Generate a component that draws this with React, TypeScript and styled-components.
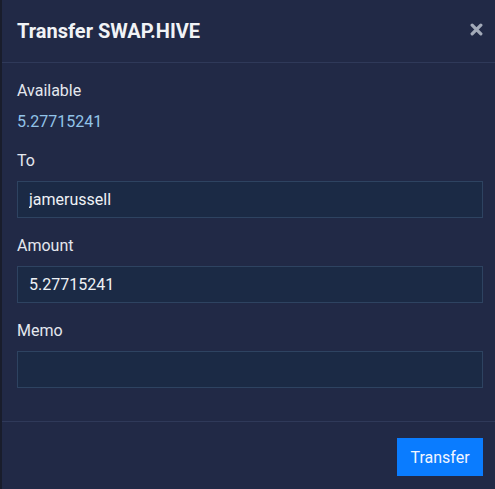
import React, { useState } from 'react';
import styled, { createGlobalStyle } from 'styled-components';

const GlobalStyle = createGlobalStyle`
    html,
    body {
        margin: 0;
        padding: 0;
        background: #191d2c;
        overflow: hidden;
    }
    body {
        font-family: Roboto, 'Liberation Sans', Arial, sans-serif;
    }
`;

const Page = styled.div`
    height: 489px;
    padding-left: 2px;
`;

const Modal = styled.div`
    width: 496px;
    height: 100%;
    background: #212946;
    display: flex;
    flex-direction: column;
    color: #e6e9ef;
`;

const Header = styled.div`
    height: 63px;
    box-sizing: border-box;
    padding: 0 15px;
    display: flex;
    align-items: center;
    justify-content: space-between;
    border-bottom: 1px solid #2f3959;
`;

const Title = styled.h5`
    margin: 0;
    font-size: 20px;
    font-weight: 700;
    color: #f1f3f6;
`;

const CloseButton = styled.button`
    border: 0;
    background: none;
    padding: 0;
    margin-top: -3px;
    width: 14px;
    height: 14px;
    display: flex;
    align-items: center;
    justify-content: center;
    cursor: pointer;
`;

const Body = styled.div`
    padding: 16px 15px 17px;
    border-bottom: 1px solid #2f3959;
`;

const Group = styled.div`
    margin-bottom: 16px;
`;

const Label = styled.div`
    font-size: 16px;
    line-height: 24px;
    margin-bottom: 8px;
    color: #e4e7ee;
`;

const Value = styled.div`
    font-size: 16px;
    line-height: 22px;
    color: #92c3e8;
`;

const Input = styled.input`
    display: block;
    width: 466px;
    height: 37px;
    box-sizing: border-box;
    padding: 0 11px;
    background: #1b2a45;
    border: 1px solid #2e4361;
    color: #eef1f5;
    font-family: inherit;
    font-size: 16px;
    outline: none;
`;

const Footer = styled.div`
    flex: 1;
    padding: 16px 15px 0;
    display: flex;
    justify-content: flex-end;
    align-items: flex-start;
`;

const SubmitButton = styled.button`
    width: 86px;
    height: 38px;
    border: 0;
    background: #0a7cff;
    color: #f2f6ff;
    font-family: inherit;
    font-size: 16px;
    cursor: pointer;
`;

const App = () => {
    const [to, setTo] = useState('jamerussell');
    const [amount, setAmount] = useState('5.27715241');
    const [memo, setMemo] = useState('');

    return (
        <Page>
            <GlobalStyle />
            <Modal>
                <Header>
                    <Title>Transfer SWAP.HIVE</Title>
                    <CloseButton aria-label="Close">
                        <svg width="13" height="13" viewBox="0 0 12 12">
                            <path d="M2 2 L10 10 M10 2 L2 10" stroke="#a3aab9" strokeWidth="3" strokeLinecap="round" />
                        </svg>
                    </CloseButton>
                </Header>
                <Body>
                    <Group>
                        <Label>Available</Label>
                        <Value>5.27715241</Value>
                    </Group>
                    <Group>
                        <Label>To</Label>
                        <Input value={to} onChange={e => setTo(e.target.value)} />
                    </Group>
                    <Group>
                        <Label>Amount</Label>
                        <Input value={amount} onChange={e => setAmount(e.target.value)} />
                    </Group>
                    <Group>
                        <Label>Memo</Label>
                        <Input value={memo} onChange={e => setMemo(e.target.value)} />
                    </Group>
                </Body>
                <Footer>
                    <SubmitButton>Transfer</SubmitButton>
                </Footer>
            </Modal>
        </Page>
    );
};

export default App;
